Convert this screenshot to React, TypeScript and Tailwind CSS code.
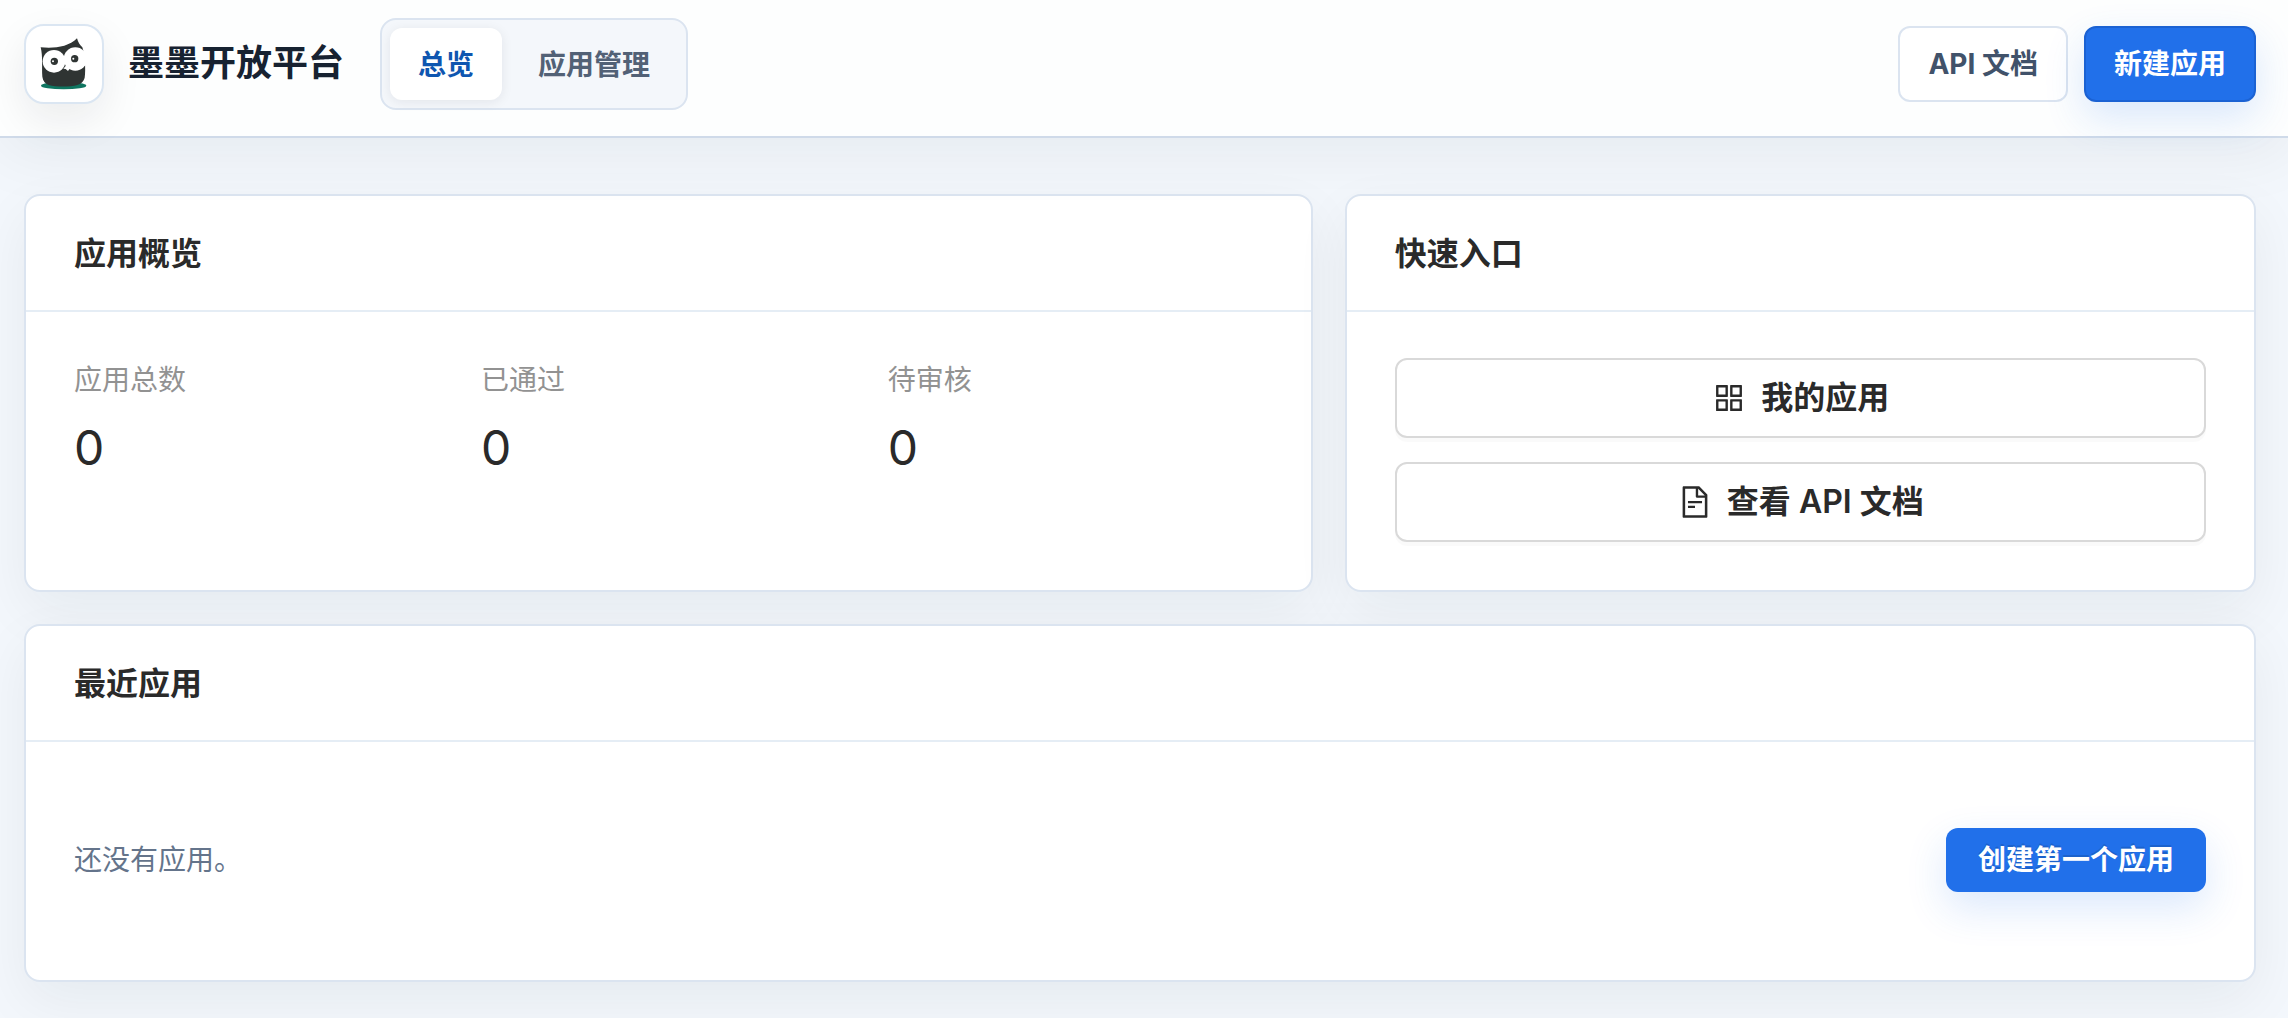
import React from "react";
import { AiOutlineAppstore, AiOutlineFileText } from "react-icons/ai";

const stats = [
  { label: "应用总数", value: 0 },
  { label: "已通过", value: 0 },
  { label: "待审核", value: 0 },
];

function OwlLogo() {
  return (
    <svg viewBox="51 51 162 162" className="w-[54px] h-[54px]" aria-hidden="true">
      <ellipse cx="131" cy="197" rx="68" ry="11" fill="#0f7560" />
      <path
        d="M62 82 C100 86 145 82 171 55 C174 66 180 76 187 82 C194 100 198 150 194 173 C190 186 184 191 172 195 C150 201 108 201 86 195 C75 191 69 183 67 170 C65 140 69 110 62 82 Z"
        fill="#2f3433"
      />
      <circle cx="102" cy="124" r="34" fill="#fff" />
      <circle cx="166" cy="117" r="35" fill="#fff" />
      <path d="M130 146 L137 147 L144 153 L149 146 L142 132 Z" fill="#fff" />
      <circle cx="103" cy="124" r="11" fill="#2f3433" />
      <circle cx="164" cy="116" r="11" fill="#2f3433" />
      <circle cx="99" cy="124" r="3" fill="#fff" />
      <circle cx="160" cy="116" r="3" fill="#fff" />
    </svg>
  );
}

interface CardProps {
  title: string;
  className?: string;
  children: React.ReactNode;
}

function Card({ title, className = "", children }: CardProps) {
  return (
    <section
      className={`bg-white border-2 border-[#dbe4f0] rounded-2xl shadow-[0_20px_56px_rgba(20,34,40,0.06)] ${className}`}
    >
      <div className="h-[116px] -mb-0.5 px-12 pt-0.5 flex items-center border-b-2 border-[#e5edf5]">
        <h2 className="text-[32px] leading-[48px] font-semibold text-[#2a2a2a]">{title}</h2>
      </div>
      <div className="p-12">{children}</div>
    </section>
  );
}

export default function App() {
  return (
    <div className="min-h-screen bg-[#f3f7fc] font-['Inter','Noto_Sans_CJK_SC',sans-serif]">
      <header className="relative z-10 h-[138px] pl-6 pr-8 flex items-center justify-between bg-[#fdfefe] border-b-2 border-[#cfdae9] shadow-[0_16px_64px_rgba(20,30,40,0.06)]">
        <div className="flex items-center">
          <div className="w-20 h-20 -mt-2 flex items-center justify-center bg-white border-2 border-[#dbe6f2] rounded-[20px] shadow-[0_16px_40px_rgba(20,30,40,0.08)]">
            <OwlLogo />
          </div>
          <h1 className="ml-6 -mt-2.5 text-4xl font-bold text-[#172231]">墨墨开放平台</h1>
          <nav className="ml-9 -mt-2 p-2 flex gap-2 bg-[#f4f7fb] border-2 border-[#dbe4f0] rounded-2xl">
            <a
              href="#overview"
              aria-current="page"
              className="h-[72px] px-7 pt-0.5 flex items-center bg-white rounded-xl text-[28px] font-bold text-[#0f56b0] shadow-[0_2px_12px_rgba(20,30,40,0.08)]"
            >
              总览
            </a>
            <a
              href="#apps"
              className="h-[72px] px-7 pt-0.5 flex items-center rounded-xl text-[28px] font-bold text-[#526176]"
            >
              应用管理
            </a>
          </nav>
        </div>
        <div className="-mt-2 flex gap-4">
          <a
            href="#docs"
            className="h-[76px] px-7 flex items-center bg-white border-2 border-[#dbe4f0] rounded-xl text-[28px] font-bold text-[#41526a]"
          >
            API 文档
          </a>
          <button
            type="button"
            className="h-[76px] px-7 bg-[#2170ea] border-2 border-[#1b62d3] rounded-xl text-[28px] font-bold text-white shadow-[0_16px_40px_rgba(33,112,234,0.16)]"
          >
            新建应用
          </button>
        </div>
      </header>

      <main className="pt-14 pb-9 pl-6 pr-8">
        <div className="-mx-4 flex">
          <div className="w-7/12 px-4 flex">
            <Card title="应用概览" className="flex-1">
              <dl className="grid grid-cols-3 gap-8">
                {stats.map((s) => (
                  <div key={s.label}>
                    <dt className="mb-2 text-[28px] leading-[44px] text-[#929292]">{s.label}</dt>
                    <dd className="text-5xl leading-[76px] text-[#2a2a2a]">{s.value}</dd>
                  </div>
                ))}
              </dl>
            </Card>
          </div>
          <div className="w-5/12 px-4 flex">
            <Card title="快速入口" className="flex-1">
              <div className="flex flex-col gap-6">
                <button
                  type="button"
                  className="h-20 flex items-center justify-center gap-3.5 bg-white border-2 border-[#d9d9d9] rounded-xl text-[32px] font-semibold text-[#2a2a2a] shadow-[0_4px_0_rgba(0,0,0,0.02)]"
                >
                  <AiOutlineAppstore className="w-9 h-9" />
                  我的应用
                </button>
                <button
                  type="button"
                  className="h-20 flex items-center justify-center gap-3.5 bg-white border-2 border-[#d9d9d9] rounded-xl text-[32px] font-semibold text-[#2a2a2a] shadow-[0_4px_0_rgba(0,0,0,0.02)]"
                >
                  <AiOutlineFileText className="w-9 h-9" />
                  查看 API 文档
                </button>
              </div>
            </Card>
          </div>
        </div>

        <Card title="最近应用" className="relative mt-8">
          <div className="py-10 flex items-center justify-between">
            <p className="text-[28px] leading-[44px] text-[#64748b]">还没有应用。</p>
            <button
              type="button"
              className="h-16 px-8 bg-[#2170ea] rounded-xl text-[28px] font-bold text-white text-shadow-[0_-2px_0_rgba(0,0,0,0.12)] shadow-[0_16px_40px_rgba(33,112,234,0.16)]"
            >
              创建第一个应用
            </button>
          </div>
        </Card>
      </main>
    </div>
  );
}
